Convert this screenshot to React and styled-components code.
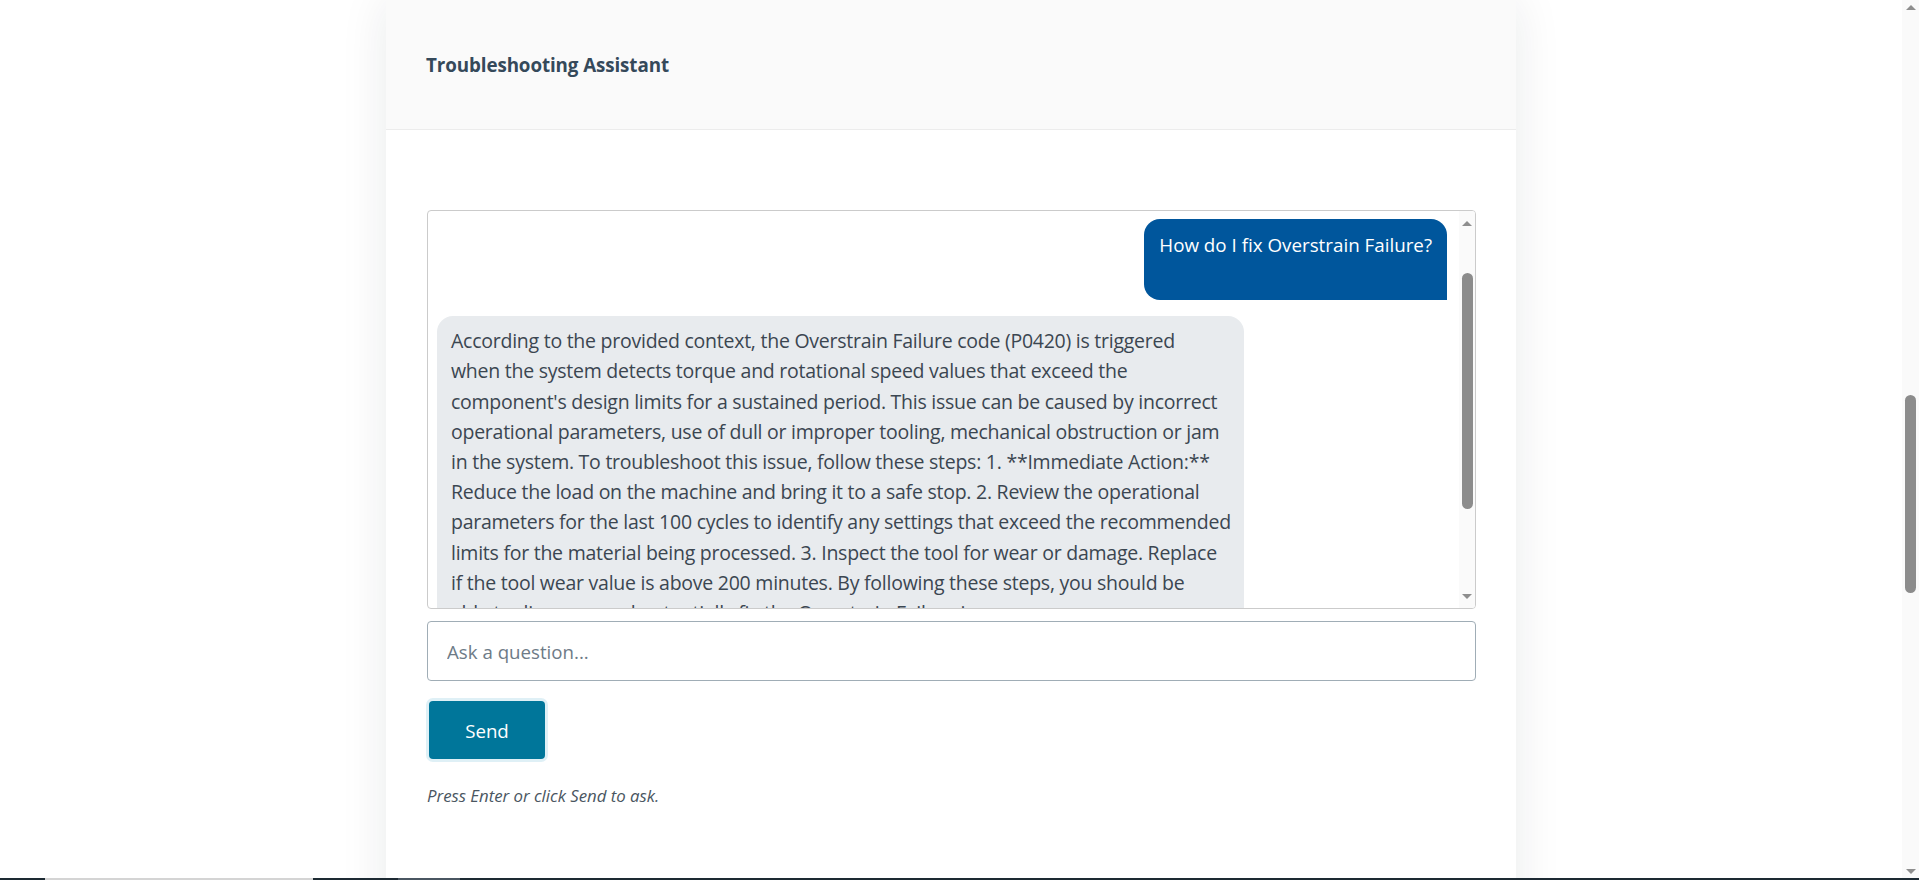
import React from "react";
import styled, { createGlobalStyle } from "styled-components";

const Global = createGlobalStyle`
  html, body { margin: 0; padding: 0; background: #ffffff; }
  body { font-family: "Open Sans", "Noto Sans", sans-serif; overflow: hidden; }
  * { box-sizing: border-box; }
`;

const Screen = styled.div`
  height: 880px;
  display: flex;
  flex-direction: column;
  overflow: hidden;
`;

const Viewport = styled.div`
  flex: 1;
  display: flex;
  min-height: 0;
`;

const Main = styled.main`
  flex: 1;
  overflow: hidden;
  background: #ffffff;
`;

const Card = styled.section`
  width: 1130px;
  min-height: 1000px;
  margin: 0 auto;
  background: #ffffff;
  box-shadow: 0 0 45px rgba(20, 30, 40, 0.09);
`;

const CardHeader = styled.header`
  height: 130px;
  background: #fafafa;
  border-bottom: 1px solid #ececec;
  display: flex;
  align-items: center;
  padding: 0 40px 0 40px;
`;

const Title = styled.h2`
  margin: 0;
  font-size: 18.8px;
  font-weight: 700;
  color: #35495a;
  letter-spacing: -0.1px;
`;

const CardBody = styled.div`
  padding: 80px 40px 40px 41px;
  display: flex;
  flex-direction: column;
`;

const ChatBox = styled.div`
  height: 399px;
  border: 1px solid #cbcbcb;
  border-radius: 4px;
  display: flex;
  overflow: hidden;
`;

const MessageList = styled.div`
  flex: 1;
  min-width: 0;
  overflow: hidden;
  padding: 8px 12px 0 9px;
  display: flex;
  flex-direction: column;
  gap: 16px;
`;

const Bubble = styled.div`
  width: ${(p) => (p.$user ? "auto" : "807px")};
  align-self: ${(p) => (p.$user ? "flex-end" : "flex-start")};
  background: ${(p) => (p.$user ? "#00569c" : "#e8ebee")};
  color: ${(p) => (p.$user ? "#ffffff" : "#3b4651")};
  border-radius: ${(p) => (p.$user ? "16px 16px 0 16px" : "16px 16px 16px 0")};
  padding: ${(p) => (p.$user ? "11px 15px 40px 15px" : "10px 10px 12px 14px")};
  font-size: ${(p) => (p.$user ? "18.8px" : "19.5px")};
  line-height: 30.2px;
  letter-spacing: ${(p) => (p.$user ? "0" : "-0.25px")};
  white-space: ${(p) => (p.$user ? "normal" : "pre")};
  flex-shrink: 0;
`;

const ScrollGutter = styled.div`
  width: ${(p) => p.$w}px;
  flex-shrink: 0;
  background: #fafafa;
  display: flex;
  flex-direction: column;
  align-items: center;
`;

const Arrow = styled.div`
  width: 0;
  height: 0;
  border-left: 5px solid transparent;
  border-right: 5px solid transparent;
  ${(p) =>
    p.$up
      ? "border-bottom: 5px solid #8e8e8e;"
      : "border-top: 5px solid #8e8e8e;"}
  margin: ${(p) => p.$m};
`;

const Track = styled.div`
  flex: 1;
  width: 100%;
  display: flex;
  flex-direction: column;
  align-items: center;
`;

const Thumb = styled.div`
  width: ${(p) => p.$w}px;
  height: ${(p) => p.$h}px;
  margin-top: ${(p) => p.$top}px;
  background: #8c8c8c;
  border-radius: 6px;
`;

const QuestionInput = styled.input`
  margin-top: 12px;
  height: 60px;
  width: 100%;
  border: 1px solid #a0adb6;
  border-radius: 4px;
  padding: 0 19px;
  font-family: inherit;
  font-size: 18.7px;
  color: #3b4651;
  outline: none;
  &::placeholder { color: #6e7b87; }
`;

const SendButton = styled.button`
  margin-top: 20px;
  align-self: flex-start;
  width: 116px;
  height: 58px;
  margin-left: 2px;
  border: none;
  border-radius: 4px;
  background: #00769a;
  color: #ffffff;
  font-family: inherit;
  font-size: 18.7px;
  box-shadow: 0 0 0 3px #dff0f6;
  cursor: pointer;
`;

const Hint = styled.p`
  margin: 25px 0 0 0;
  font-size: 16.8px;
  font-style: italic;
  color: #4a5661;
`;

const BottomStrip = styled.div`
  height: 2px;
  background: #1d2a33;
  display: flex;
`;

const StripSegment = styled.div`
  width: ${(p) => p.$w}px;
  margin-left: ${(p) => p.$ml}px;
  background: ${(p) => p.$c};
`;

function Scrollbar({ width, thumbTop, thumbHeight, thumbWidth, upMargin, downMargin }) {
  return (
    <ScrollGutter $w={width}>
      <Arrow $up $m={upMargin} />
      <Track>
        <Thumb $top={thumbTop} $h={thumbHeight} $w={thumbWidth} />
      </Track>
      <Arrow $m={downMargin} />
    </ScrollGutter>
  );
}

const answerLines = [
  "According to the provided context, the Overstrain Failure code (P0420) is triggered",
  "when the system detects torque and rotational speed values that exceed the",
  "component's design limits for a sustained period. This issue can be caused by incorrect",
  "operational parameters, use of dull or improper tooling, mechanical obstruction or jam",
  "in the system. To troubleshoot this issue, follow these steps: 1. **Immediate Action:**",
  "Reduce the load on the machine and bring it to a safe stop. 2. Review the operational",
  "parameters for the last 100 cycles to identify any settings that exceed the recommended",
  "limits for the material being processed. 3. Inspect the tool for wear or damage. Replace",
  "if the tool wear value is above 200 minutes. By following these steps, you should be",
  "able to diagnose and potentially fix the Overstrain Failure issue.",
];

export default function App() {
  return (
    <>
      <Global />
      <Screen>
        <Viewport>
          <Main>
            <Card>
              <CardHeader>
                <Title>Troubleshooting Assistant</Title>
              </CardHeader>
              <CardBody>
                <ChatBox>
                  <MessageList>
                    <Bubble $user>How do I fix Overstrain Failure?</Bubble>
                    <Bubble>{answerLines.join("\n")}</Bubble>
                  </MessageList>
                  <Scrollbar
                    width={16}
                    thumbTop={47}
                    thumbHeight={236}
                    thumbWidth={11}
                    upMargin="10px 0 0 0"
                    downMargin="0 0 9px 0"
                  />
                </ChatBox>
                <QuestionInput placeholder="Ask a question..." />
                <SendButton>Send</SendButton>
                <Hint>Press Enter or click Send to ask.</Hint>
              </CardBody>
            </Card>
          </Main>
          <Scrollbar
            width={17}
            thumbTop={385}
            thumbHeight={198}
            thumbWidth={11}
            upMargin="5px 0 0 0"
            downMargin="0 0 4px 0"
          />
        </Viewport>
        <BottomStrip>
          <StripSegment $ml={45} $w={268} $c="#d4d4d4" />
          <StripSegment $ml={85} $w={62} $c="#4a5661" />
        </BottomStrip>
      </Screen>
    </>
  );
}
